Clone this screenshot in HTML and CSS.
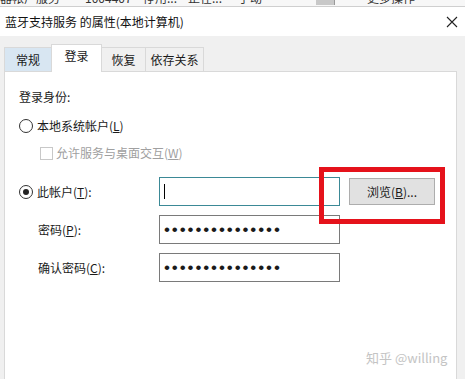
FILE: index.html
```html
<!DOCTYPE html>
<html lang="zh-CN">
<head>
    <meta charset="UTF-8">
    <meta name="viewport" content="width=device-width, initial-scale=1.0">
    <title>蓝牙支持服务 的属性</title>
    <link rel="stylesheet" href="styles.css">
</head>
<body>
    <!-- behind the dialog: the services list, cut off -->
    <div class="back-list">
        <div class="back-row">
            <span class="c-name">器帐户服务</span>
            <span class="c-pid">1004407</span>
            <span class="c-a">停用...</span>
            <span class="c-b">正在...</span>
            <span class="c-c">手动</span>
            <span class="c-scroll"></span>
            <span class="c-more">更多操作</span>
        </div>
    </div>

    <div class="titlebar">
        <span class="title">蓝牙支持服务 的属性(本地计算机)</span>
        <svg class="close" width="12" height="12" viewBox="0 0 12 12">
            <path d="M1 1 L11 11 M11 1 L1 11" stroke="#222" stroke-width="1.1" fill="none"/>
        </svg>
    </div>

    <div class="dialog">
        <div class="tabs">
            <div class="tab hover" style="width: 48px">常规</div>
            <div class="tab active" style="width: 51px">登录</div>
            <div class="tab" style="width: 45px">恢复</div>
            <div class="tab" style="width: 59px">依存关系</div>
        </div>

        <div class="panel">
            <div class="heading">登录身份:</div>

            <div class="option">
                <span class="radio"></span>
                <span>本地系统帐户(<u>L</u>)</span>
            </div>

            <div class="option sub disabled">
                <span class="check"></span>
                <span>允许服务与桌面交互(<u>W</u>)</span>
            </div>

            <div class="fields">
                <div class="option">
                    <span class="radio checked"></span>
                    <span>此帐户(<u>T</u>):</span>
                </div>
                <div class="field focused"><span class="caret"></span></div>
                <div class="button">浏览(<u>B</u>)...</div>

                <div class="label">密码(<u>P</u>):</div>
                <div class="field"><span class="dots">•••••••••••••••</span></div>
                <div></div>

                <div class="label">确认密码(<u>C</u>):</div>
                <div class="field"><span class="dots">•••••••••••••••</span></div>
                <div></div>
            </div>

            <!-- annotation drawn over the screenshot -->
            <div class="mark"></div>
        </div>
    </div>

    <div class="watermark">知乎 @willing</div>
</body>
</html>
```

FILE: styles.css
```css
body {
    margin: 0;
    width: 465px;
    height: 379px;
    overflow: hidden;
    background: #f0f0f0;
    font-family: "Noto Sans CJK SC", sans-serif;
    font-size: 12px;
    color: #1a1a1a;
    position: relative;
}
u {
    text-underline-offset: 1px;
}

.back-list {
    height: 6px;
    overflow: hidden;
    background: #f7f7f7;
    border-bottom: 1px solid #cfcfcf;
}
.back-row {
    display: flex;
    margin-top: -9px;
    line-height: 14px;
    color: #333;
    white-space: nowrap;
}
.c-name { width: 85px; }
.c-pid { width: 58px; }
.c-a { width: 45px; }
.c-b { width: 50px; }
.c-c { width: 78px; }
.c-scroll {
    width: 18px;
    height: 14px;
    background: #c8c8c8;
    border-right: 1px solid #999;
    margin-right: 32px;
}
.c-more { width: 60px; }

.titlebar {
    height: 29px;
    background: #fff;
    display: flex;
    align-items: center;
    justify-content: space-between;
    padding: 0 7px 0 5px;
}
.title {
    font-size: 12px;
    color: #111;
}

.dialog {
    padding: 8px 8px 0 4px;
}
.tabs {
    display: flex;
    align-items: flex-end;
    height: 27px;
}
.tab {
    box-sizing: border-box;
    height: 24px;
    line-height: 23px;
    text-align: center;
    border: 1px solid #d9d9d9;
    border-bottom: none;
    margin-left: -1px;
    background: #f0f0f0;
}
.tab:first-child {
    margin-left: 0;
}
.tab.hover {
    background: #d8e6f2;
}
.tab.active {
    height: 28px;
    line-height: 21px;
    background: #fff;
    position: relative;
    z-index: 1;
    margin-bottom: -1px;
}

.panel {
    position: relative;
    background: #fff;
    border: 1px solid #d9d9d9;
    border-bottom: none;
    height: 290px;
    padding: 17px 0 0 14px;
}
.heading {
    line-height: 16px;
}
.option {
    display: flex;
    align-items: center;
    gap: 4px;
    line-height: 16px;
}
.panel > .option {
    margin-top: 13px;
}
.option.sub {
    margin-top: 11px;
    padding-left: 21px;
    gap: 3px;
}
.disabled {
    color: #a0a0a0;
}
.radio {
    width: 12px;
    height: 12px;
    border: 1px solid #333;
    border-radius: 50%;
    box-sizing: content-box;
    display: flex;
    align-items: center;
    justify-content: center;
}
.radio.checked::after {
    content: "";
    width: 6px;
    height: 6px;
    border-radius: 50%;
    background: #222;
}
.check {
    width: 11px;
    height: 11px;
    border: 1px solid #c8c8c8;
}

.fields {
    display: grid;
    grid-template-columns: 140px 181px auto;
    grid-auto-rows: 29px;
    row-gap: 9px;
    align-items: center;
    margin-top: 16px;
}
.label {
    padding-left: 19px;
}
.field {
    box-sizing: border-box;
    height: 29px;
    border: 1px solid #7a7a7a;
    display: flex;
    align-items: center;
    padding-left: 4px;
}
.field.focused {
    border-color: #3b8996;
}
.caret {
    width: 1px;
    height: 15px;
    background: #000;
}
.dots {
    font-family: "Liberation Sans", sans-serif;
    font-size: 17px;
    letter-spacing: 1.9px;
    line-height: 1;
}
.button {
    box-sizing: border-box;
    width: 86px;
    height: 27px;
    margin-left: 9px;
    background: #e1e1e1;
    border: 1px solid #adadad;
    display: flex;
    align-items: center;
    justify-content: center;
}

.mark {
    position: absolute;
    left: 314px;
    top: 95px;
    width: 116px;
    height: 47px;
    border: 5px solid #e5121b;
}

.watermark {
    position: absolute;
    left: 366px;
    top: 348px;
    font-size: 13px;
    color: #c4c4c4;
    white-space: nowrap;
}
```
